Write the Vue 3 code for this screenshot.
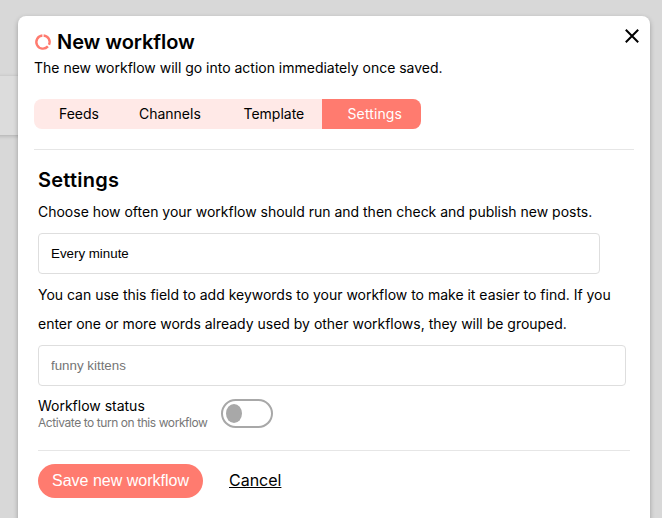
<script setup>
import { ref } from 'vue'

const tabs = [
  { name: 'Feeds', key: 'feeds' },
  { name: 'Channels', key: 'channels' },
  { name: 'Template', key: 'template' },
  { name: 'Settings', key: 'settings' },
]
const activeTab = ref('settings')
const frequency = ref('Every minute')
const keywords = ref('')
</script>

<template>
  <div class="page">
    <div class="strip"></div>
    <section class="modal">
      <button class="close" aria-label="Close">
        <svg width="16" height="16" viewBox="0 0 16 16">
          <path d="M1.8 1.8L14.2 14.2M14.2 1.8L1.8 14.2" fill="none" stroke="#000" stroke-width="2" />
        </svg>
      </button>

      <header class="head">
        <div class="title-row">
          <svg class="ring" width="18" height="18" viewBox="0 0 18 18">
            <path
              d="M8.4 2.45A6.6 6.6 0 1 0 13.9 13.4M15 11.8A6.6 6.6 0 0 0 9.6 2.45"
              fill="none"
              stroke="#ff7b6f"
              stroke-width="2.4"
            />
          </svg>
          <h1>New workflow</h1>
        </div>
        <p class="lead">The new workflow will go into action immediately once saved.</p>
        <nav class="tabs">
          <span
            v-for="tab in tabs"
            :key="tab.key"
            class="tab"
            :class="[tab.key, { active: tab.key === activeTab }]"
            @click="activeTab = tab.key"
          >{{ tab.name }}</span>
        </nav>
      </header>

      <div class="body">
        <h2>Settings</h2>
        <p class="hint">Choose how often your workflow should run and then check and publish new posts.</p>
        <input v-model="frequency" class="field short" type="text" />
        <p class="hint second">You can use this field to add keywords to your workflow to make it easier to find. If you<br />enter one or more words already used by other workflows, they will be grouped.</p>
        <input v-model="keywords" class="field" type="text" placeholder="funny kittens" />
        <div class="status">
          <div class="labels">
            <span class="name">Workflow status</span>
            <span class="note">Activate to turn on this workflow</span>
          </div>
          <span class="toggle"><span class="knob"></span></span>
        </div>
        <footer class="actions">
          <button class="save">Save new workflow</button>
          <a class="cancel">Cancel</a>
        </footer>
      </div>
    </section>
  </div>
</template>

<style>
body {
  background: #d8d8d8;
  overflow: hidden;
}
</style>

<style scoped>
* {
  box-sizing: border-box;
}
.page {
  position: relative;
  height: 518px;
  padding: 16px 12px 0 18px;
  overflow: hidden;
  background: #d8d8d8;
  color: #000;
  font-family: Inter, "Liberation Sans", sans-serif;
  font-size: 14px;
  letter-spacing: -0.01px;
}
.strip {
  position: absolute;
  left: -10px;
  top: 76px;
  width: 200px;
  height: 59px;
  background: #dcdcdc;
  box-shadow: 0 1px 4px rgba(0, 0, 0, 0.2);
}
.modal {
  position: relative;
  height: 540px;
  padding: 0 16px;
  background: #fff;
  border-radius: 8px;
  box-shadow: 0 2px 5px rgba(0, 0, 0, 0.28);
}
.close {
  position: absolute;
  top: 12px;
  right: 10px;
  display: flex;
  padding: 0;
  border: 0;
  background: none;
}
.head {
  height: 134px;
  padding-top: 14px;
  border-bottom: 1px solid #e6e6e6;
}
.title-row {
  display: flex;
  align-items: center;
  gap: 5px;
  height: 24px;
}
h1,
h2 {
  margin: 0;
  font-size: 20px;
  font-weight: 600;
  line-height: 24px;
}
h1 {
  letter-spacing: -0.06px;
}
h2 {
  letter-spacing: 0.24px;
}
.lead {
  margin: 4px 0 0;
  line-height: 20px;
}
.tabs {
  display: flex;
  width: 387px;
  height: 30px;
  margin-top: 21px;
  overflow: hidden;
  border-radius: 8px;
  background: #ffe9e7;
  line-height: 30px;
}
.tab {
  padding-left: 25px;
}
.feeds {
  width: 80px;
}
.channels {
  width: 104.5px;
}
.template {
  width: 103.5px;
}
.settings {
  width: 99px;
  padding-left: 25.5px;
  letter-spacing: 0.12px;
}
.active {
  background: #ff7b6f;
  color: #fff;
}
.body {
  padding: 18px 4px 0;
}
.hint {
  margin: 5px 0 7px;
  line-height: 29px;
  white-space: nowrap;
}
.hint.second {
  margin: 6px 0 7px;
}
.field {
  display: block;
  width: 588px;
  height: 41px;
  padding: 0 12px;
  border: 1px solid #dedede;
  border-radius: 4px;
  background: #fff;
  color: #000;
  font: 13.333px "Liberation Sans", Arial, sans-serif;
}
.field.short {
  width: 562px;
}
.field::placeholder {
  color: #757575;
}
.status {
  display: flex;
  height: 64px;
  padding-top: 11px;
}
.labels {
  display: flex;
  flex-direction: column;
  width: 183px;
}
.name {
  line-height: 18px;
}
.note {
  color: #777;
  font-size: 12px;
  line-height: 16px;
  letter-spacing: -0.43px;
  white-space: nowrap;
}
.toggle {
  display: flex;
  align-items: center;
  width: 52px;
  height: 29px;
  margin-top: 2px;
  padding-left: 3px;
  border: 2px solid #a8a8a8;
  border-radius: 15px;
}
.knob {
  width: 16px;
  height: 19px;
  border-radius: 50%;
  background: #a8a8a8;
}
.actions {
  display: flex;
  align-items: center;
  width: 592px;
  padding-top: 13px;
  border-top: 1px solid #e6e6e6;
}
.save {
  width: 165px;
  height: 34px;
  padding: 0;
  border: 0;
  border-radius: 17px;
  background: #ff7b6f;
  color: #fff;
  font: 16px "Liberation Sans", Arial, sans-serif;
}
.cancel {
  margin-left: 26px;
  padding-bottom: 2px;
  font-size: 16px;
  line-height: 20px;
  text-decoration: underline;
}
</style>
